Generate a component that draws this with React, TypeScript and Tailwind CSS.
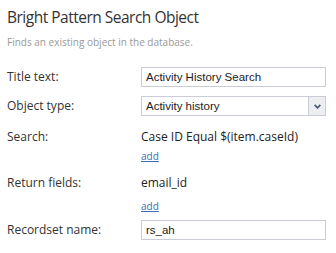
import React from 'react';

const font = { fontFamily: '"Open Sans", sans-serif' };
const fieldFont = { fontFamily: '"Liberation Sans", Arial, sans-serif' };

function Row({ label, children, className = '' }: { label: string; children: React.ReactNode; className?: string }) {
  return (
    <div className={`flex items-center h-[20px] ${className}`}>
      <div className="w-[134px] shrink-0 text-[12px] leading-[20px] text-[#333]">{label}</div>
      <div className="flex-1">{children}</div>
    </div>
  );
}

function AddLink({ className = '' }: { className?: string }) {
  return (
    <div className={`pl-[134px] h-[14px] text-[10px] leading-[14px] ${className}`}>
      <a href="#" className="text-[#3e6aae] underline">
        add
      </a>
    </div>
  );
}

export default function App() {
  return (
    <div className="w-[336px] h-[253px] bg-white pl-[7px] pr-[10px] pt-[7px]" style={font}>
      <h1 className="text-[15.5px] leading-[20px] tracking-[-0.5px] text-[#333]">Bright Pattern Search Object</h1>
      <p className="mt-[8px] text-[10px] leading-[14px] text-[#999]">Finds an existing object in the database.</p>

      <Row label="Title text:" className="mt-[18px]">
        <input
          readOnly
          value="Activity History Search"
          style={fieldFont}
          className="block w-[185px] h-[20px] border border-[#c9cbd6] px-[4px] text-[11.5px] text-[#222] outline-none"
        />
      </Row>

      <Row label="Object type:" className="mt-[9px]">
        <div className="flex w-[185px] h-[20px] border border-[#c9cbd6]">
          <div style={fieldFont} className="flex-1 px-[4px] text-[11.5px] leading-[18px] text-[#222]">
            Activity history
          </div>
          <div className="w-[17px] border-l border-[#c9cbd6] bg-[#eceef2] flex items-center justify-center">
            <svg width="7" height="5" viewBox="0 0 7 5">
              <path d="M0.6 0.8 L3.5 3.8 L6.4 0.8" fill="none" stroke="#4f5c7a" strokeWidth="1.8" />
            </svg>
          </div>
        </div>
      </Row>

      <Row label="Search:" className="mt-[11px]">
        <div className="text-[12px] leading-[20px] text-[#222]">Case ID Equal $(item.caseId)</div>
      </Row>
      <AddLink className="mt-[2px]" />

      <Row label="Return fields:" className="mt-[10px]">
        <div className="text-[12px] leading-[20px] text-[#222]">email_id</div>
      </Row>
      <AddLink className="mt-[6px]" />

      <Row label="Recordset name:" className="mt-[7px]">
        <input
          readOnly
          value="rs_ah"
          style={fieldFont}
          className="block w-[185px] h-[20px] border border-[#c9cbd6] px-[4px] text-[11.5px] text-[#222] outline-none"
        />
      </Row>
    </div>
  );
}
